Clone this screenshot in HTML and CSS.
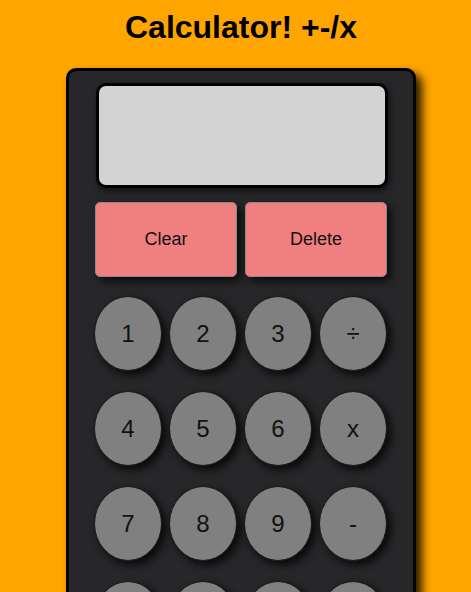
FILE: index.html
```html
<!DOCTYPE html>
<html>
<head>
<meta charset="utf-8">
<link rel="stylesheet" href="styles.css">
</head>
<body>
<div class="page">
  <h1 class="title">Calculator! +-/x</h1>
  <div class="calc">
    <div class="display"></div>
    <div class="actions">
      <button class="action">Clear</button>
      <button class="action">Delete</button>
    </div>
    <div class="keys">
      <button class="key">1</button>
      <button class="key">2</button>
      <button class="key">3</button>
      <button class="key">÷</button>
      <button class="key">4</button>
      <button class="key">5</button>
      <button class="key">6</button>
      <button class="key">x</button>
      <button class="key">7</button>
      <button class="key">8</button>
      <button class="key">9</button>
      <button class="key">-</button>
      <button class="key">0</button>
      <button class="key">.</button>
      <button class="key">=</button>
      <button class="key">+</button>
    </div>
  </div>
</div>
</body>
</html>
```

FILE: styles.css
```css
html, body {
  margin: 0;
  padding: 0;
  background: #ffa500;
  font-family: "Liberation Sans", Arial, sans-serif;
}
.page {
  display: flex;
  flex-direction: column;
  align-items: center;
  padding-left: 11px;
  padding-bottom: 40px;
}
.title {
  margin: 9px 0 22px;
  font-size: 32px;
  font-weight: bold;
  line-height: normal;
  color: #000;
}
.calc {
  box-sizing: border-box;
  width: 350px;
  background: #27272a;
  border: 3px solid #000;
  border-radius: 10px;
  box-shadow: 6px 6px 10px rgba(0,0,0,0.85);
  padding: 12px 26px 24px;
  display: flex;
  flex-direction: column;
}
.display {
  box-sizing: border-box;
  width: 292px;
  height: 105px;
  margin-left: 1px;
  background: #d3d3d3;
  border: 3px solid #000;
  border-radius: 10px;
  box-shadow: 2px 3px 6px rgba(0,0,0,0.6);
  margin-bottom: 14px;
}
.actions {
  display: grid;
  grid-template-columns: 142px 142px;
  column-gap: 8px;
  margin-bottom: 19px;
}
.action {
  box-sizing: border-box;
  height: 75px;
  background: #f08080;
  border: 1px solid #8a8a8a;
  border-radius: 5px;
  box-shadow: 4px 4px 8px rgba(0,0,0,0.75);
  font-family: "Liberation Sans", Arial, sans-serif;
  font-size: 18px;
  color: #111;
  padding: 0;
}
.keys {
  display: grid;
  grid-template-columns: repeat(4, 68px);
  column-gap: 7px;
  row-gap: 20px;
  margin-left: -1px;
}
.key {
  box-sizing: border-box;
  width: 68px;
  height: 75px;
  border-radius: 50%;
  background: #808080;
  border: 1px solid #1a1a1a;
  box-shadow: 4px 4px 8px rgba(0,0,0,0.8);
  font-family: "Liberation Sans", Arial, sans-serif;
  font-size: 24px;
  color: #111;
  padding: 0;
}
```
